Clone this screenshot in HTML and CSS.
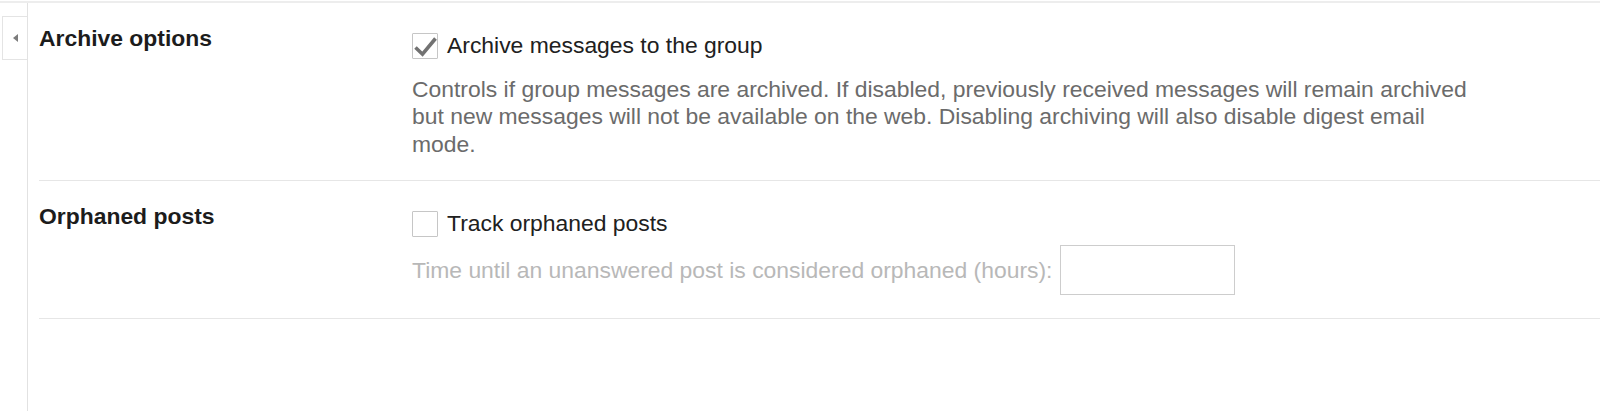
FILE: index.html
```html
<!DOCTYPE html>
<html lang="en">
<head>
<meta charset="utf-8">
<title>Group settings</title>
<link rel="stylesheet" href="styles.css">
</head>
<body>
<div class="page">
  <aside class="rail">
    <button class="collapse" type="button" aria-label="Collapse">
      <svg width="5" height="8" viewBox="0 0 5 8"><path d="M5 0 L5 8 L0 4 Z" fill="#7c7c7c"/></svg>
    </button>
  </aside>
  <main class="main">
    <section class="row">
      <h2 class="row-title">Archive options</h2>
      <div class="row-body">
        <div class="check-line">
          <span class="box">
            <svg width="26" height="26" viewBox="0 0 26 26"><path d="M3.5 14.5 L10.5 21.2 L23.5 5.5" fill="none" stroke="#727272" stroke-width="3.6"/></svg>
          </span>
          <span class="check-label">Archive messages to the group</span>
        </div>
        <p class="desc">Controls if group messages are archived. If disabled, previously received messages will remain archived but new messages will not be available on the web. Disabling archiving will also disable digest email mode.</p>
      </div>
    </section>
    <section class="row row-last">
      <h2 class="row-title">Orphaned posts</h2>
      <div class="row-body">
        <div class="check-line">
          <span class="box"></span>
          <span class="check-label">Track orphaned posts</span>
        </div>
        <div class="hours-line">
          <span class="hours-label">Time until an unanswered post is considered orphaned (hours):</span>
          <span class="hours-input"></span>
        </div>
      </div>
    </section>
  </main>
</div>
</body>
</html>
```

FILE: styles.css
```css
html, body {
  margin: 0;
  padding: 0;
  background: #ffffff;
}

body {
  font-family: "Liberation Sans", Arial, sans-serif;
  font-size: 22.9px;
  line-height: 27px;
  color: #222222;
}

.page {
  display: flex;
  margin-top: 1px;
  border-top: 2px solid #ededed;
  min-height: 408px;
}

.rail {
  width: 27px;
  flex: none;
  border-right: 1px solid #e2e2e2;
}

.collapse {
  display: flex;
  align-items: center;
  justify-content: center;
  margin: 13px 0 0 2px;
  width: 25px;
  height: 44px;
  padding: 0;
  background: #ffffff;
  border: 1px solid #e4e4e4;
  border-right: none;
  box-sizing: border-box;
}

.main {
  flex: 1;
  padding-left: 11px;
}

.row {
  display: grid;
  grid-template-columns: 373px 1fr;
  padding: 21.5px 0 22px;
  border-bottom: 1px solid #e6e6e6;
}

.row-last {
  padding-bottom: 22.5px;
}

.row-title {
  margin: 0;
  font-size: 22.9px;
  line-height: 27px;
  font-weight: bold;
  color: #1c1c1c;
}

.row-body {
  padding-top: 8px;
}

.check-line {
  display: flex;
  align-items: center;
  gap: 9px;
  height: 26px;
}

.box {
  width: 26px;
  height: 26px;
  box-sizing: border-box;
  border: 1px solid #c6c6c6;
  border-radius: 1px;
  flex: none;
  position: relative;
}

.box svg {
  position: absolute;
  left: -1px;
  top: -1px;
}

.check-label {
  color: #202020;
}

.desc {
  margin: 17px 0 0;
  max-width: 1066px;
  color: #6b6b6b;
  line-height: 27.5px;
}

.hours-line {
  display: flex;
  align-items: center;
  margin-top: 8.5px;
}

.hours-label {
  color: #b8b8b8;
}

.hours-input {
  width: 175px;
  height: 50px;
  box-sizing: border-box;
  border: 1px solid #cdcdcd;
  margin-left: 8px;
  background: #ffffff;
}
```
